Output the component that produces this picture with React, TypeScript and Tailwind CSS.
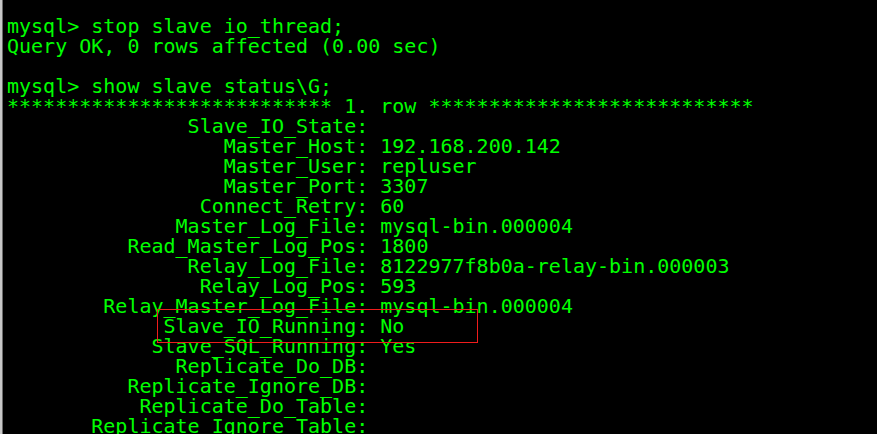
import React from 'react';

const W = 29;

const fields: [string, string][] = [
  ['Slave_IO_State', ''],
  ['Master_Host', '192.168.200.142'],
  ['Master_User', 'repluser'],
  ['Master_Port', '3307'],
  ['Connect_Retry', '60'],
  ['Master_Log_File', 'mysql-bin.000004'],
  ['Read_Master_Log_Pos', '1800'],
  ['Relay_Log_File', '8122977f8b0a-relay-bin.000003'],
  ['Relay_Log_Pos', '593'],
  ['Relay_Master_Log_File', 'mysql-bin.000004'],
  ['Slave_IO_Running', 'No'],
  ['Slave_SQL_Running', 'Yes'],
  ['Replicate_Do_DB', ''],
  ['Replicate_Ignore_DB', ''],
  ['Replicate_Do_Table', ''],
  ['Replicate_Ignore_Table', ''],
];

const stars = '*'.repeat(27);

const App: React.FC = () => {
  const lines = [
    'mysql> stop slave io_thread;',
    'Query OK, 0 rows affected (0.00 sec)',
    '',
    'mysql> show slave status\\G;',
    `${stars} 1. row ${stars}`,
    ...fields.map(([k, v]) => `${k.padStart(W, ' ')}: ${v}`),
  ];

  return (
    <div className="w-[877px] h-[434px] overflow-hidden bg-black flex">
      {/* window edge */}
      <div className="w-[2px] bg-[#c8c8c8]" />
      <div className="w-[1px] bg-[#6a6a6a]" />
      <div className="relative flex-1 pl-[4px] pt-[16px]">
        <pre className="m-0 text-[20px] leading-[20px] text-[#00ff00] font-['DejaVu_Sans_Mono',monospace] whitespace-pre">
          {lines.map((l, i) => (
            <div key={i} className="h-[20px]">{l || ' '}</div>
          ))}
        </pre>
        {/* annotation box */}
        <div className="absolute left-[154px] top-[309px] w-[321px] h-[34px] border border-[#f01c1c]" />
      </div>
    </div>
  );
};

export default App;
